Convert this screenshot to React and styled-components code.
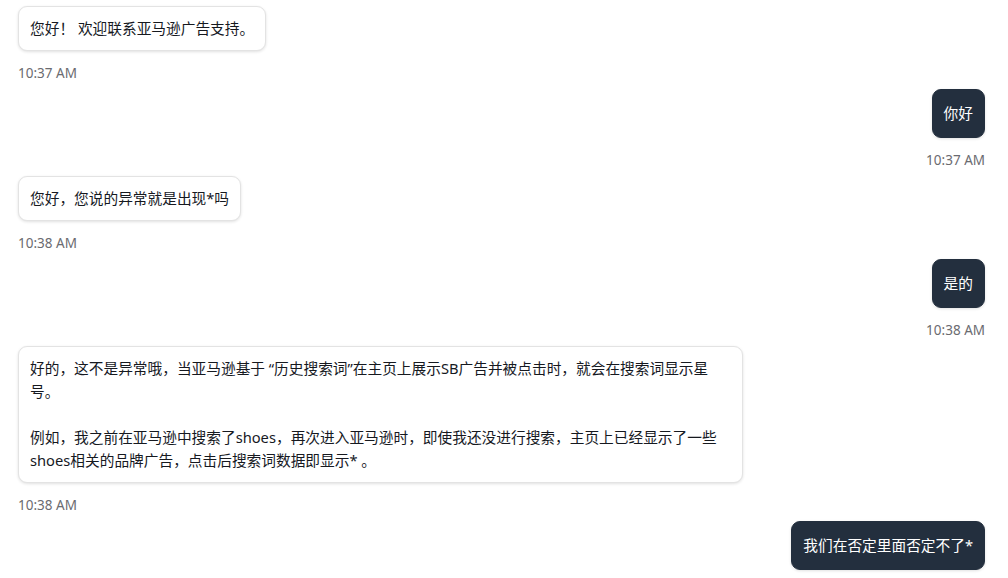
import React from 'react';
import styled, { createGlobalStyle } from 'styled-components';

const GlobalStyle = createGlobalStyle`
  html, body {
    margin: 0;
    padding: 0;
    background: #ffffff;
  }
  body {
    font-family: "Noto Sans", "Noto Sans CJK SC", sans-serif;
    color: #16191f;
  }
`;

const Thread = styled.div`
  display: flex;
  flex-direction: column;
  gap: 7px;
  padding: 6px 23px 0 18px;
`;

const Group = styled.div`
  display: flex;
  flex-direction: column;
  align-items: ${(p) => (p.mine ? 'flex-end' : 'flex-start')};
`;

const Bubble = styled.div`
  box-sizing: border-box;
  max-width: 75%;
  padding: ${(p) => (p.mine ? '12px 11px' : '10px 11px')};
  font-size: 14.7px;
  line-height: 23px;
  border-radius: 9px;
  white-space: pre-wrap;
  background: ${(p) => (p.mine ? '#232f3e' : '#ffffff')};
  color: ${(p) => (p.mine ? '#ffffff' : '#16191f')};
  border: 1px solid ${(p) => (p.mine ? '#232f3e' : '#e3e3e3')};
  box-shadow: 0 1px 3px rgba(0, 0, 0, 0.12);
`;

const Time = styled.div`
  margin-top: 13px;
  font-size: 13.5px;
  line-height: 18px;
  color: #6b6b70;
`;

const messages = [
  { mine: false, text: '您好！ 欢迎联系亚马逊广告支持。', time: '10:37 AM' },
  { mine: true, text: '你好', time: '10:37 AM' },
  { mine: false, text: '您好，您说的异常就是出现*吗', time: '10:38 AM' },
  { mine: true, text: '是的', time: '10:38 AM' },
  {
    mine: false,
    text:
      '好的，这不是异常哦，当亚马逊基于 “历史搜索词”在主页上展示SB广告并被点击时，就会在搜索词显示星号。\n\n例如，我之前在亚马逊中搜索了shoes，再次进入亚马逊时，即使我还没进行搜索，主页上已经显示了一些shoes相关的品牌广告，点击后搜索词数据即显示* 。',
    time: '10:38 AM',
  },
  { mine: true, text: '我们在否定里面否定不了*', time: '10:38 AM' },
];

const App = () => (
  <>
    <GlobalStyle />
    <Thread>
      {messages.map((m, i) => (
        <Group key={i} mine={m.mine}>
          <Bubble mine={m.mine}>{m.text}</Bubble>
          <Time>{m.time}</Time>
        </Group>
      ))}
    </Thread>
  </>
);

export default App;
